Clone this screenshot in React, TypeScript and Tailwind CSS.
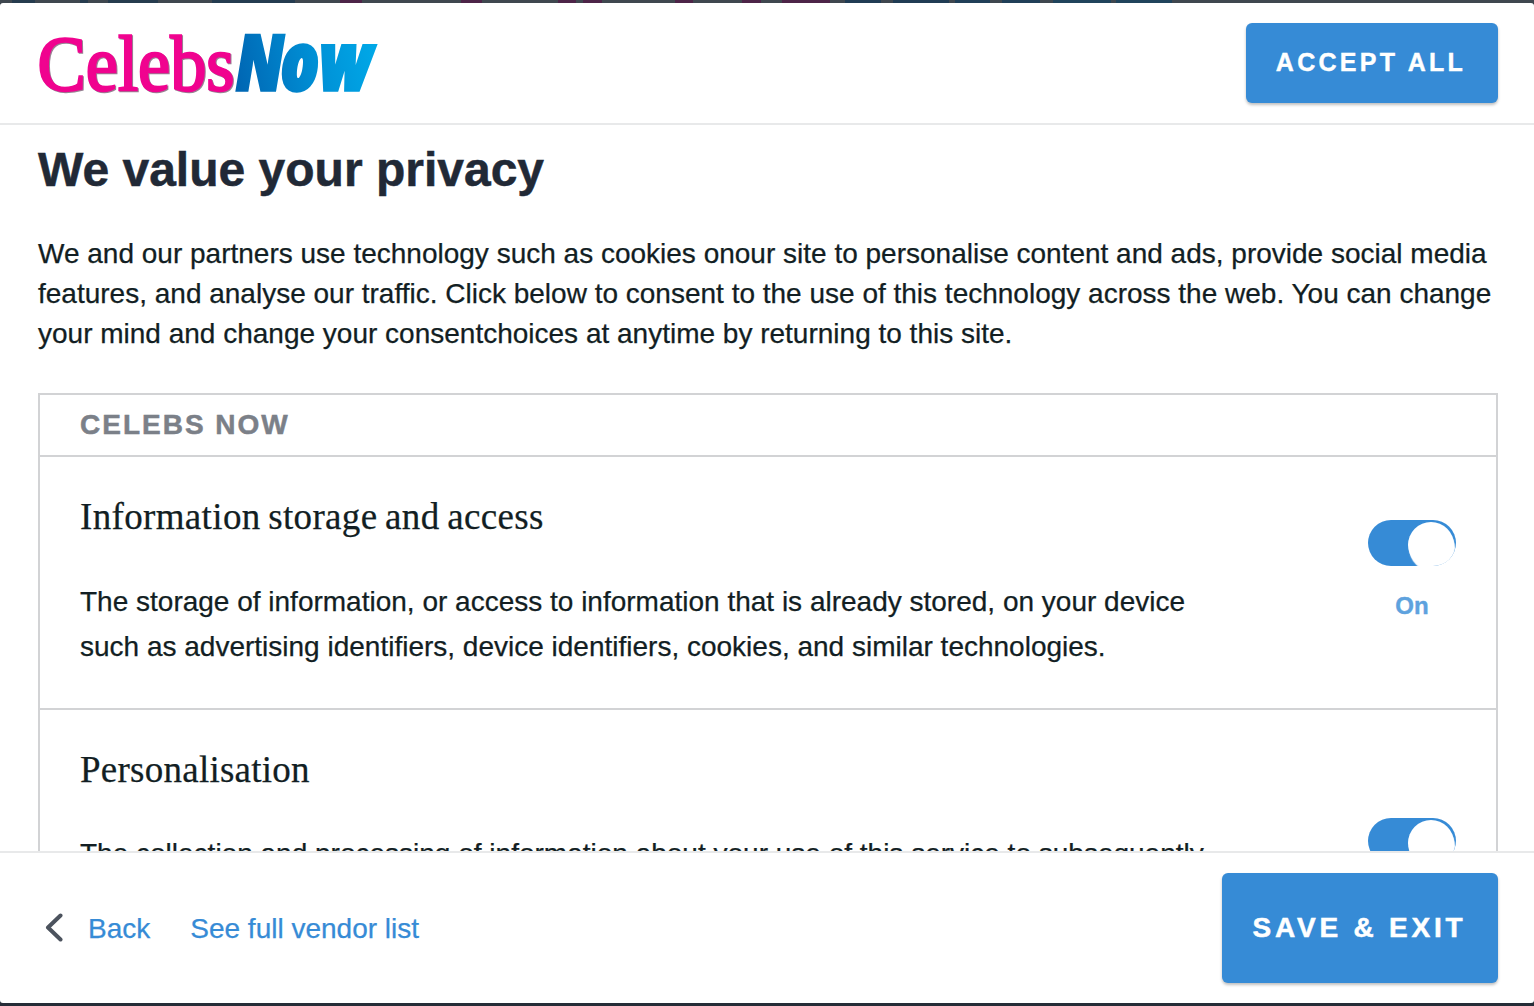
const backdrop: [number, number, string][] = [
  [12, 23, '#263c4e'],
  [80, 8, '#263c4e'],
  [108, 50, '#263c4e'],
  [212, 83, '#243c50'],
  [340, 22, '#4d2448'],
  [461, 21, '#4d2448'],
  [558, 18, '#4d2448'],
  [583, 19, '#4d2448'],
  [675, 18, '#4d2448'],
  [742, 19, '#4d2448'],
  [782, 48, '#4d2448'],
  [845, 36, '#203c54'],
  [893, 56, '#203c54'],
  [955, 35, '#203f58'],
  [1002, 38, '#203f58'],
  [1053, 58, '#20445c'],
  [1116, 56, '#20445c'],
];

function Logo() {
  return (
    <svg width="366" height="118" viewBox="24 4 366 118" className="block overflow-visible" role="img" aria-label="CelebsNow">
      <defs>
        <linearGradient id="now" gradientUnits="userSpaceOnUse" x1="236" y1="80" x2="378" y2="50">
          <stop offset="0" stopColor="#0066b3" />
          <stop offset="0.6" stopColor="#0093d8" />
          <stop offset="1" stopColor="#00a9e8" />
        </linearGradient>
      </defs>
      <text
        x="37.5"
        y="89.5"
        fontFamily="Liberation Serif, serif"
        fontSize="79"
        textLength="197"
        lengthAdjust="spacingAndGlyphs"
        fill="#f0038f"
        stroke="#f0038f"
        strokeWidth="2.4"
        className="[filter:drop-shadow(1px_1px_0_#3d153588)]"
      >
        Celebs
      </text>
      <text
        x="236"
        y="89.5"
        fontFamily="Open Sans, sans-serif"
        fontWeight="800"
        fontStyle="italic"
        fill="url(#now)"
        stroke="url(#now)"
        strokeWidth="3.4"
        textLength="136"
        lengthAdjust="spacingAndGlyphs"
      >
        <tspan fontSize="75.5">N</tspan>
        <tspan fontSize="80" dx="-4">ow</tspan>
      </text>
    </svg>
  );
}

function Toggle() {
  return (
    <div className="h-[46px] w-[88px] overflow-hidden rounded-full bg-[#368bd6] pl-10 pt-0.5">
      <div className="h-[46px] w-[46px] rounded-full bg-white shadow-[1px_3px_1px_white]" />
    </div>
  );
}

export default function App() {
  return (
    <div className="flex h-[1006px] w-[1534px] flex-col overflow-hidden bg-[#2b333d] font-['Liberation_Sans',Arial,sans-serif] text-[#121e23]">
      <div className="relative h-[3px] shrink-0 bg-[#3f474f]">
        {backdrop.map(([left, width, background]) => (
          <span key={left} className="absolute top-0 h-full" style={{ left, width, background }} />
        ))}
      </div>
      <div className="flex h-[1000px] flex-col overflow-hidden rounded-[3px] bg-white">
        <header className="flex h-[122px] shrink-0 items-start justify-between border-b-2 border-[#e8e9ea] pl-6 pr-9">
          <div className="pt-px"><Logo /></div>
          <button className="mt-5 h-20 w-[252px] rounded-md bg-[#368bd6] pb-px pr-[2px] text-[25px] font-bold tracking-[3.3px] text-white [-webkit-text-stroke:0.4px] shadow-[0_2px_3px_rgba(0,0,0,0.25)]">ACCEPT ALL</button>
        </header>
        <main className="h-[726px] shrink-0 overflow-hidden pl-[38px] pr-9">
          <h1 className="pt-[17px] text-[48px] font-bold leading-[56px] text-[#212936] [-webkit-text-stroke:0.5px]">We value your privacy</h1>
          <p className="mt-9 whitespace-nowrap text-[28px] leading-10 [-webkit-text-stroke:0.25px]">
            We and our partners use technology such as cookies onour site to personalise content and ads, provide social media<br />
            features, and analyse our traffic. Click below to consent to the use of this technology across the web. You can change<br />
            your mind and change your consentchoices at anytime by returning to this site.
          </p>
          <section className="mt-[39px] border-2 border-[#d2d3d5]">
            <h2 className="flex h-[60px] items-center pl-10 text-[28px] font-bold tracking-[2px] text-[#7b8088] [-webkit-text-stroke:0.5px]">CELEBS NOW</h2>
            <div className="flex h-[253px] justify-between border-t-2 border-[#d2d3d5] pl-10 pr-10">
              <div className="whitespace-nowrap [-webkit-text-stroke:0.25px]">
                <h3 className="mt-9 font-['Liberation_Serif',serif] text-[37px] leading-[48px] tracking-[0.35px] [word-spacing:-2px]">Information storage and access</h3>
                <p className="mt-[38px] text-[28px] leading-[45px]">
                  The storage of information, or access to information that is already stored, on your device<br />
                  such as advertising identifiers, device identifiers, cookies, and similar technologies.
                </p>
              </div>
              <div className="flex flex-col items-center pt-[63px]">
                <Toggle />
                <span className="mt-6 text-2xl font-bold text-[#5ea2de] [-webkit-text-stroke:0.4px]">On</span>
              </div>
            </div>
            <div className="flex h-[350px] justify-between border-t-2 border-[#d2d3d5] pl-10 pr-10">
              <div className="whitespace-nowrap [-webkit-text-stroke:0.25px]">
                <h3 className="mt-9 font-['Liberation_Serif',serif] text-[37px] leading-[48px] tracking-[0.25px]">Personalisation</h3>
                <p className="mt-[37px] text-[28px] leading-[45px]">The collection and processing of information about your use of this service to subsequently</p>
              </div>
              <div className="pt-[108px]"><Toggle /></div>
            </div>
          </section>
        </main>
        <footer className="flex h-[152px] shrink-0 items-start justify-between border-t-2 border-[#e8e9ea] pl-[45px] pr-9">
          <div className="flex items-center pt-[55px] text-[28px] leading-10 text-[#368bd6] [-webkit-text-stroke:0.25px]">
            <svg width="18" height="30" viewBox="0 0 18 30" className="mb-px" fill="none" stroke="#4c535e" strokeWidth="4" strokeLinecap="round" strokeLinejoin="round"><path d="M15.5 2.5 3 14.5l12.5 12" /></svg>
            <a className="ml-[25px] pt-px">Back</a>
            <a className="ml-10 pt-px">See full vendor list</a>
          </div>
          <button className="mt-5 h-[110px] w-[276px] rounded-md bg-[#368bd6] pr-px text-[28px] font-bold tracking-[3.8px] text-white [-webkit-text-stroke:0.5px] shadow-[0_2px_3px_rgba(0,0,0,0.25)]">SAVE &amp; EXIT</button>
        </footer>
      </div>
      <div className="h-[3px] shrink-0 bg-[#252c37]" />
    </div>
  );
}
